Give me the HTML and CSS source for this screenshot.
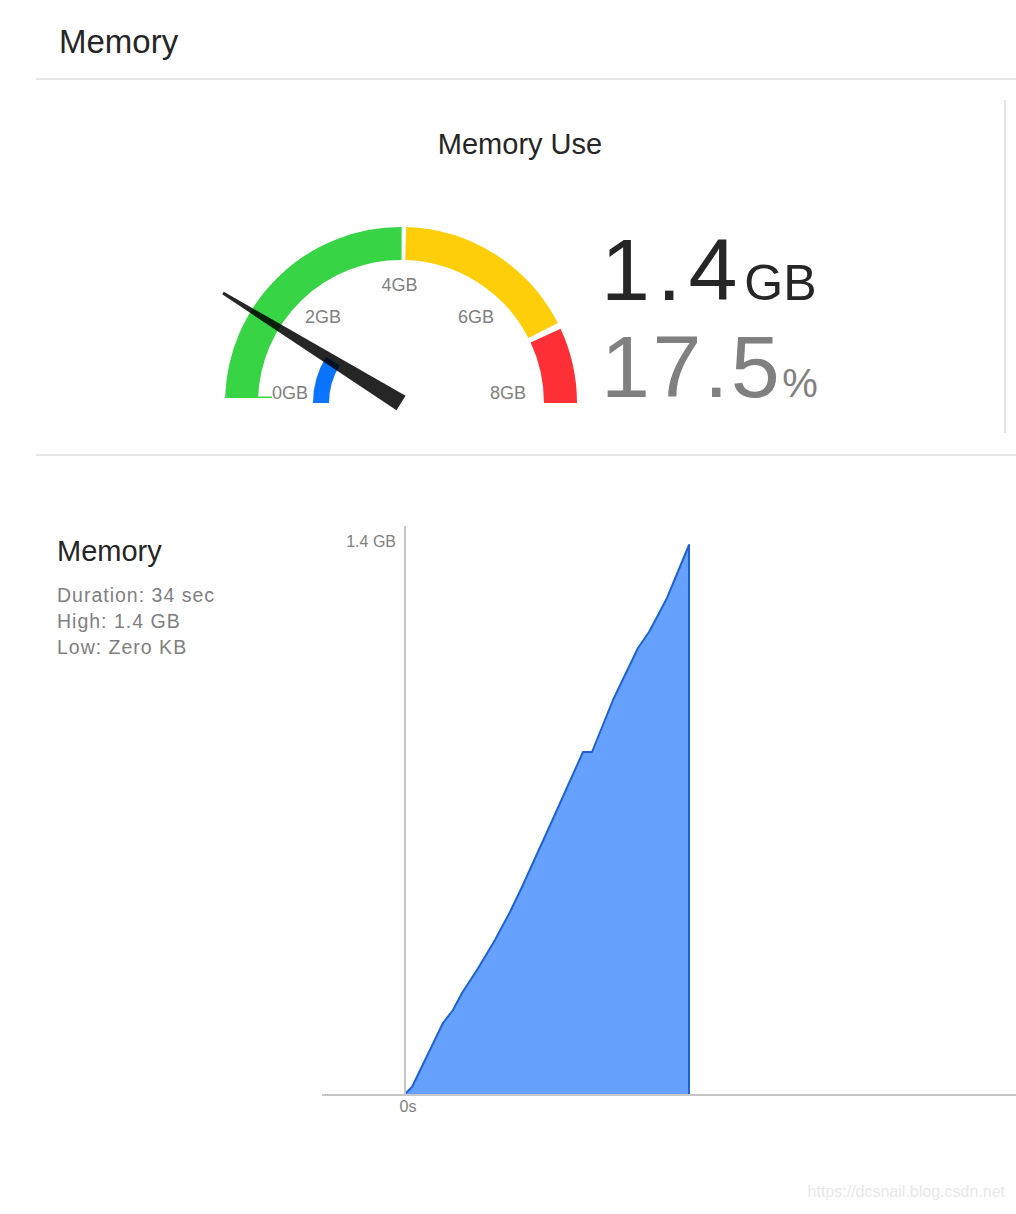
FILE: index.html
```html
<!DOCTYPE html>
<html lang="en">
<head>
<meta charset="utf-8">
<title>Memory</title>
<link rel="stylesheet" href="styles.css">
</head>
<body>
<header class="page-header">
  <h1 class="page-title">Memory</h1>
</header>

<section class="gauge-section">
  <div class="gauge-panel">
    <h2 class="gauge-title">Memory Use</h2>
    <div class="gauge-row">
      <svg class="gauge" width="370" height="200" viewBox="0 0 370 200" xmlns="http://www.w3.org/2000/svg">
        <!-- arcs: centre (186,188), r 159.5 -->
        <path class="arc-green" d="M 26.6 182.4 A 159.5 159.5 0 0 1 186.6 28.5"/>
        <path class="arc-yellow" d="M 190.7 28.6 A 159.5 159.5 0 0 1 328.1 115.6"/>
        <path class="arc-red" d="M 330.6 120.6 A 159.5 159.5 0 0 1 345.5 188"/>
        <line class="arc-tick" x1="10" y1="182.2" x2="57" y2="182.2"/>
        <path class="arc-blue" d="M 106 188 A 80 80 0 0 1 117.8 146.2"/>
        <text class="gauge-label" x="57" y="184">0GB</text>
        <text class="gauge-label" x="90" y="108">2GB</text>
        <text class="gauge-label" x="166.5" y="76">4GB</text>
        <text class="gauge-label" x="243" y="108">6GB</text>
        <text class="gauge-label" x="275" y="184">8GB</text>
        <polygon class="needle" points="190.5,180.8 181.5,195.2 7.2,79.3 8.8,76.7"/>
      </svg>
      <div class="readout">
        <div class="readout-main"><span class="readout-num">1.4</span><span class="readout-unit">GB</span></div>
        <div class="readout-pct"><span class="readout-num">17.5</span><span class="readout-pct-unit">%</span></div>
      </div>
    </div>
  </div>
</section>

<section class="chart-section">
  <div class="chart-info">
    <h3 class="chart-title">Memory</h3>
    <p class="chart-stat">Duration: 34 sec</p>
    <p class="chart-stat">High: 1.4 GB</p>
    <p class="chart-stat">Low: Zero KB</p>
  </div>
  <svg class="chart" width="694" height="605" viewBox="0 0 694 605" xmlns="http://www.w3.org/2000/svg">
    <polygon class="area" points="83,574 90,567 121,503 131,490 140,473 155,450 173,420 188,392 200,367 220,323 230,301 261,232 270,232 291,180 316,128 327,112 335,97 345,78 367,25 367,575 83,575"/>
    <line class="axis" x1="83" y1="6" x2="83" y2="576"/>
    <line class="axis" x1="0" y1="575" x2="694" y2="575"/>
    <text class="axis-label" x="74" y="27" text-anchor="end">1.4 GB</text>
    <text class="axis-label" x="86" y="592" text-anchor="middle">0s</text>
  </svg>
</section>

<footer class="watermark">https://dcsnail.blog.csdn.net</footer>
</body>
</html>
```

FILE: styles.css
```css
html, body {
  margin: 0;
  padding: 0;
  background: #ffffff;
}

body {
  width: 1016px;
  font-family: "Liberation Sans", Arial, Helvetica, sans-serif;
  color: #262626;
}

h1, h2, h3, p {
  margin: 0;
  font-weight: normal;
}

/* ---------- header ---------- */
.page-header {
  margin-left: 36px;
  padding: 25px 0 20px 23px;
  border-bottom: 2px solid #e5e5e5;
}

.page-title {
  font-size: 33px;
  line-height: 33px;
  color: #262626;
}

/* ---------- gauge ---------- */
.gauge-section {
  margin-left: 36px;
  padding: 20px 0 21px 0;
  border-bottom: 2px solid #e5e5e5;
}

.gauge-panel {
  margin-right: 10px;
  border-right: 2px solid #e5e5e5;
  padding: 30px 0 18px 0;
}

.gauge-title {
  font-size: 29px;
  line-height: 29px;
  text-align: center;
  color: #262626;
  margin-bottom: 56px;
}

.gauge-row {
  display: flex;
  align-items: flex-start;
  padding-left: 179px;
  gap: 16px;
}

.gauge {
  display: block;
  flex: none;
}

.arc-green,
.arc-yellow,
.arc-red {
  fill: none;
  stroke-width: 33;
}

.arc-green { stroke: #37d445; }
.arc-yellow { stroke: #ffce0a; }
.arc-red { stroke: #ff3035; }

.arc-tick {
  stroke: #37d445;
  stroke-width: 1.5;
}

.arc-blue {
  fill: none;
  stroke: #0a74ff;
  stroke-width: 16;
}

.gauge-label {
  font-family: "Liberation Sans", Arial, sans-serif;
  font-size: 18px;
  fill: #808080;
}

.needle {
  fill: rgba(0, 0, 0, 0.85);
}

.readout {
  margin-top: 6px;
  white-space: nowrap;
}

.readout-main,
.readout-pct {
  font-size: 88px;
  line-height: 97px;
  height: 97px;
}

.readout-main { color: #262626; }
.readout-pct { color: #808080; }

.readout-main .readout-num {
  letter-spacing: 7px;
}

.readout-pct .readout-num {
  letter-spacing: 2.5px;
}

.readout-unit {
  font-size: 50px;
  line-height: 1;
}

.readout-pct-unit {
  font-size: 40px;
  line-height: 1;
}

/* ---------- chart ---------- */
.chart-section {
  display: flex;
  align-items: flex-start;
  padding: 64px 0 0 57px;
}

.chart-info {
  width: 265px;
  flex: none;
  padding-top: 17px;
}

.chart-title {
  font-size: 29px;
  line-height: 29px;
  color: #262626;
  margin-bottom: 16px;
}

.chart-stat {
  font-size: 19.5px;
  line-height: 26px;
  letter-spacing: 1px;
  color: #808080;
}

.chart {
  display: block;
  flex: none;
}

.area {
  fill: #66a1ff;
  stroke: #1c62d6;
  stroke-width: 2;
  stroke-linejoin: round;
}

.axis {
  stroke: #c6c6c6;
  stroke-width: 2;
}

.axis-label {
  font-family: "Liberation Sans", Arial, sans-serif;
  font-size: 16px;
  fill: #808080;
}

/* ---------- watermark ---------- */
.watermark {
  margin-top: 58px;
  padding-right: 11px;
  text-align: right;
  font-size: 16px;
  line-height: 18px;
  color: #e8e8e8;
}
```
